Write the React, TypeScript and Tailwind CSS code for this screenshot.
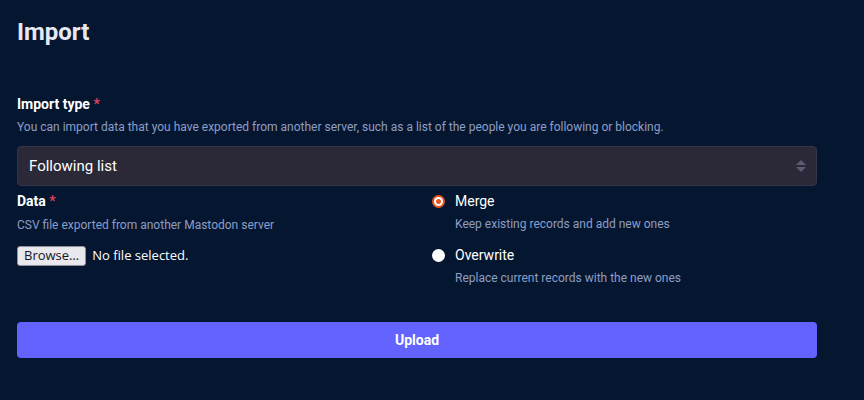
export default function App() {
  return (
    <div className="min-h-screen bg-[#051730] px-[17px] pt-[18px] font-['Roboto',sans-serif] text-[#e8eaf3]">
      <h1 className="text-[24px] font-bold leading-[28px] text-[#e6e8f2]">Import</h1>

      <div className="mt-[50px] w-[800px]">
        {/* Import type */}
        <div className="text-[14px] font-bold leading-[17px] text-white">
          Import type <span className="text-[#df405a]">*</span>
        </div>
        <p className="mt-[6px] text-[12px] leading-[16px] text-[#8e9dc6]">
          You can import data that you have exported from another server, such as a list of the people you are following or blocking.
        </p>
        <div className="mt-[11px] flex h-[40px] items-center justify-between rounded-[4px] border border-[#36344a] bg-[#2b2937] pl-[11px] pr-[9px]">
          <span className="text-[15px] text-white">Following list</span>
          <svg width="12" height="18" viewBox="0 0 12 18" className="text-[#5c5a74]">
            <path d="M6 3 L11 8 H1 Z" fill="currentColor" />
            <path d="M6 15 L11 10 H1 Z" fill="currentColor" />
          </svg>
        </div>

        <div className="mt-[7px] grid grid-cols-[400px_1fr] gap-x-[15px]">
          {/* Data */}
          <div>
            <div className="text-[14px] font-bold leading-[17px] text-white">
              Data <span className="text-[#df405a]">*</span>
            </div>
            <p className="mt-[7px] text-[12px] leading-[16px] text-[#8e9dc6]">
              CSV file exported from another Mastodon server
            </p>
            <div className="mt-[13px] flex items-center gap-[6px] font-['Open_Sans',sans-serif] text-[13px]">
              <span className="flex h-[20px] items-center rounded-[3px] border border-[#8f8f9d] bg-[#e9e9ed] px-[6px] text-[#15141a]">
                Browse…
              </span>
              <span className="text-white">No file selected.</span>
            </div>
          </div>

          {/* Mode */}
          <div>
            <div className="flex items-center gap-[10px]">
              <span className="flex h-[13px] w-[13px] items-center justify-center rounded-full bg-[#e9551f]">
                <span className="flex h-[9px] w-[9px] items-center justify-center rounded-full bg-white">
                  <span className="h-[5px] w-[5px] rounded-full bg-[#e9551f]" />
                </span>
              </span>
              <span className="text-[14px] font-normal leading-[17px] text-white">Merge</span>
            </div>
            <p className="mt-[6px] pl-[23px] text-[12px] leading-[16px] text-[#8e9dc6]">
              Keep existing records and add new ones
            </p>
            <div className="mt-[15px] flex items-center gap-[10px]">
              <span className="h-[13px] w-[13px] rounded-full bg-white" />
              <span className="text-[14px] font-normal leading-[17px] text-white">Overwrite</span>
            </div>
            <p className="mt-[6px] pl-[23px] text-[12px] leading-[16px] text-[#8e9dc6]">
              Replace current records with the new ones
            </p>
          </div>
        </div>

        <button className="mt-[36px] flex h-[36px] w-full items-center justify-center rounded-[4px] bg-[#6364ff] text-[14px] font-bold text-white">
          Upload
        </button>
      </div>
    </div>
  )
}
